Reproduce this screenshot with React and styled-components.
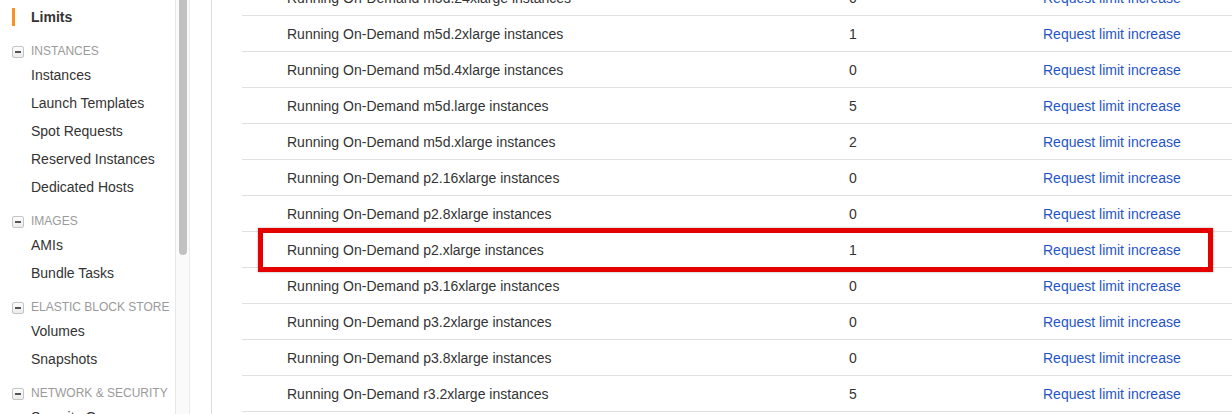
import React from "react";
import styled, { createGlobalStyle } from "styled-components";

const Global = createGlobalStyle`
  html, body { margin: 0; padding: 0; background: #fff; }
  body {
    font-family: "Liberation Sans", Arial, Helvetica, sans-serif;
    height: 414px;
    overflow: hidden;
    color: #333;
    -webkit-font-smoothing: antialiased;
  }
`;

const Layout = styled.div`
  display: flex;
  height: 414px;
  overflow: hidden;
`;

const Nav = styled.nav`
  width: 175px;
  flex-shrink: 0;
  padding-top: 3px;
  box-sizing: border-box;
`;

const NavActive = styled.div`
  position: relative;
  padding-left: 31px;
  font-size: 14px;
  line-height: 28px;
  font-weight: bold;
  color: #333;
  &::before {
    content: "";
    position: absolute;
    left: 12px;
    top: 5px;
    width: 3px;
    height: 18px;
    background: #f7931e;
  }
`;

const Section = styled.div`
  margin-top: 10px;
`;

const SectionHeader = styled.div`
  display: flex;
  align-items: center;
  gap: 7px;
  padding-left: 12px;
  font-size: 12px;
  line-height: 20px;
  color: #9a9a9a;
  text-transform: uppercase;
  white-space: nowrap;
`;

const Toggle = styled.span`
  position: relative;
  width: 10px;
  height: 10px;
  border: 1px solid #c4c4c4;
  border-radius: 2px;
  background: linear-gradient(#fdfdfd, #ececec);
  flex-shrink: 0;
  margin-top: 1px;
  &::after {
    content: "";
    position: absolute;
    left: 2px;
    top: 4px;
    width: 6px;
    height: 2px;
    background: #555;
  }
`;

const NavItem = styled.div`
  padding-left: 31px;
  font-size: 14px;
  line-height: 28px;
  color: #333;
  white-space: nowrap;
`;

const ScrollTrack = styled.div`
  position: relative;
  width: 15px;
  flex-shrink: 0;
  background: #fafafa;
  border-left: 1px solid #e8e8e8;
  border-right: 1px solid #ececec;
  box-sizing: border-box;
`;

const ScrollThumb = styled.div`
  position: absolute;
  left: 3px;
  top: -40px;
  width: 8px;
  height: 295px;
  background: #c1c1c1;
  border-radius: 4px;
`;

const Main = styled.main`
  flex: 1;
  margin-left: 21px;
  border-left: 1px solid #dcdcdc;
  padding-left: 30px;
  overflow: hidden;
`;

const Table = styled.div`
  margin-top: -20px;
`;

const Row = styled.div`
  position: relative;
  display: grid;
  grid-template-columns: 562px 194px 1fr;
  align-items: center;
  height: 36px;
  box-sizing: border-box;
  padding-left: 45px;
  border-bottom: 1px solid #e1e1e1;
  font-size: 14px;
  white-space: nowrap;
`;

const Name = styled.span`
  color: #333;
`;

const Value = styled.span`
  color: #333;
`;

const Link = styled.a`
  color: #1f54c6;
  text-decoration: none;
  cursor: pointer;
`;

const Highlight = styled.div`
  position: absolute;
  left: 16px;
  right: 19px;
  top: -4px;
  bottom: -5px;
  border: 5px solid #e50000;
  box-shadow: 0 0 2px rgba(0, 0, 0, 0.35);
  pointer-events: none;
`;

const rows = [
  ["m5d.24xlarge", 0],
  ["m5d.2xlarge", 1],
  ["m5d.4xlarge", 0],
  ["m5d.large", 5],
  ["m5d.xlarge", 2],
  ["p2.16xlarge", 0],
  ["p2.8xlarge", 0],
  ["p2.xlarge", 1, true],
  ["p3.16xlarge", 0],
  ["p3.2xlarge", 0],
  ["p3.8xlarge", 0],
  ["r3.2xlarge", 5],
];

const sections = [
  { title: "Instances", items: ["Instances", "Launch Templates", "Spot Requests", "Reserved Instances", "Dedicated Hosts"] },
  { title: "Images", items: ["AMIs", "Bundle Tasks"] },
  { title: "Elastic Block Store", items: ["Volumes", "Snapshots"] },
  { title: "Network & Security", items: ["Security Groups", "Elastic IPs"] },
];

export default function App() {
  return (
    <>
      <Global />
      <Layout>
        <Nav>
          <NavActive>Limits</NavActive>
          {sections.map((s) => (
            <Section key={s.title}>
              <SectionHeader>
                <Toggle />
                {s.title}
              </SectionHeader>
              {s.items.map((i) => (
                <NavItem key={i}>{i}</NavItem>
              ))}
            </Section>
          ))}
        </Nav>
        <ScrollTrack>
          <ScrollThumb />
        </ScrollTrack>
        <Main>
          <Table>
            {rows.map(([type, val, hl]) => (
              <Row key={type}>
                <Name>Running On-Demand {type} instances</Name>
                <Value>{val}</Value>
                <Link>Request limit increase</Link>
                {hl && <Highlight />}
              </Row>
            ))}
          </Table>
        </Main>
      </Layout>
    </>
  );
}
